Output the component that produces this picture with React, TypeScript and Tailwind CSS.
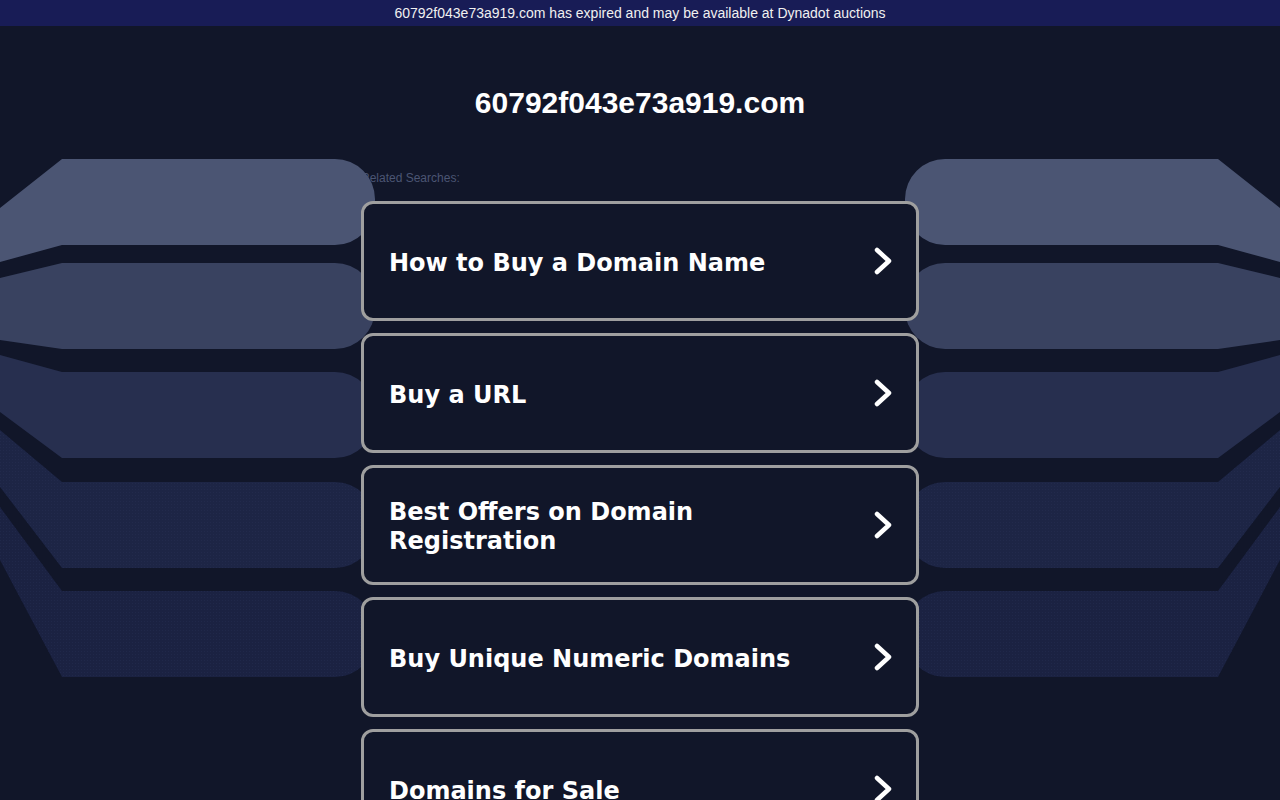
const bands = [
  { top: 159, bottom: 245, t0: 208, b0: 262, fill: '#4b5573', dots: false },
  { top: 263, bottom: 349, t0: 278, b0: 340, fill: '#394260', dots: false },
  { top: 372, bottom: 458, t0: 355, b0: 412, fill: '#272f4f', dots: false },
  { top: 482, bottom: 568, t0: 430, b0: 487, fill: '#1d2545', dots: true },
  { top: 591, bottom: 677, t0: 507, b0: 560, fill: '#1b2242', dots: true },
]

const bandPath = (b: (typeof bands)[number]) =>
  `M 0 ${b.t0} L 62 ${b.top} L 335 ${b.top} A 40 40 0 0 1 375 ${b.top + 40} L 375 ${b.bottom - 40} A 40 40 0 0 1 335 ${b.bottom} L 62 ${b.bottom} L 0 ${b.b0} Z`

const Backdrop = () => (
  <svg className="pointer-events-none absolute left-0 top-0" width="1280" height="800" viewBox="0 0 1280 800">
    <defs>
      <pattern id="dots" width="3" height="3" patternUnits="userSpaceOnUse">
        <rect x="0" y="0" width="1" height="1" fill="#2a3358" />
      </pattern>
    </defs>
    {[false, true].map((mirror) => (
      <g key={String(mirror)} transform={mirror ? 'translate(1280,0) scale(-1,1)' : undefined}>
        {bands.map((b, i) => (
          <g key={i}>
            <path d={bandPath(b)} fill={b.fill} />
            {b.dots && <path d={bandPath(b)} fill="url(#dots)" opacity="0.35" />}
          </g>
        ))}
      </g>
    ))}
  </svg>
)

const searches = [
  'How to Buy a Domain Name',
  'Buy a URL',
  'Best Offers on Domain Registration',
  'Buy Unique Numeric Domains',
  'Domains for Sale',
]

const Chevron = () => (
  <svg width="20" height="28" viewBox="0 0 20 28" className="shrink-0">
    <path d="M4 3 L16 14 L4 25" fill="none" stroke="#ffffff" strokeWidth="4.5" strokeLinecap="round" strokeLinejoin="round" />
  </svg>
)

export default function App() {
  return (
    <div className="relative min-h-[800px] w-full overflow-hidden bg-[#111629] font-['Liberation_Sans',Arial,sans-serif]">
      <Backdrop />
      <div className="relative flex h-[26px] items-center justify-center bg-[#181c56] text-[14px] text-[#f0f0f0]">
        60792f043e73a919.com has expired and may be available at Dynadot auctions
      </div>
      <div className="relative mx-auto w-[558px]">
        <h1 className="mt-[59px] text-center text-[30px] font-bold leading-[35px] text-white">60792f043e73a919.com</h1>
        <div className="mt-[51px] text-[12px] leading-[14px] text-[#4b5573]">Related Searches:</div>
        <div className="mt-[16px] flex flex-col gap-[12px]">
          {searches.map((s) => (
            <div
              key={s}
              className="flex h-[120px] items-center justify-between rounded-[12px] border-[3px] border-[#9f9f9f] bg-[#111629] pl-[25px] pr-[23px]"
            >
              <span className="w-[440px] pt-[4px] font-['DejaVu_Sans',Verdana,sans-serif] text-[24px] font-bold leading-[29px] text-white">
                {s}
              </span>
              <Chevron />
            </div>
          ))}
        </div>
      </div>
    </div>
  )
}
